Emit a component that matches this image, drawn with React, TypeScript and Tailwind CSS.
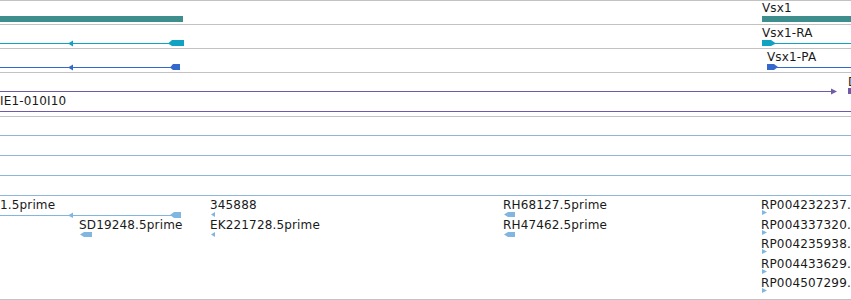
import React from "react";

const W = 851;
const TEAL = "#3f8e8e";
const CYAN = "#10a2c2";
const BLUE = "#3468cc";
const PURPLE = "#6f5ba8";
const LBLUE = "#80b6df";
const LLINE = "#8fb6da";

function Glyphs({ h, children }: { h: number; children: React.ReactNode }) {
  return (
    <svg
      className="absolute left-0 -top-px"
      width={W}
      height={h}
      viewBox={`0 0 ${W} ${h}`}
      shapeRendering="crispEdges"
    >
      {children}
    </svg>
  );
}

function Label({ className, children }: { className: string; children: React.ReactNode }) {
  return (
    <div className={`absolute whitespace-nowrap text-[12px] leading-[14px] tracking-[0.15px] text-[#1a1a1a] ${className}`}>
      {children}
    </div>
  );
}

export default function App() {
  return (
    <div
      className="w-[851px] h-[300px] bg-white overflow-hidden flex flex-col"
      style={{ fontFamily: '"DejaVu Sans", "Liberation Sans", sans-serif' }}
    >
      {/* Track 1: gene */}
      <div className="relative h-[24px] shrink-0 border-t border-[#c2c2c2]">
        <Glyphs h={24}>
          <rect x={0} y={16} width={183} height={6} fill={TEAL} />
          <rect x={762} y={16} width={89} height={6} fill={TEAL} />
        </Glyphs>
        <Label className="left-[762px] top-0">Vsx1</Label>
      </div>

      {/* Track 2: transcript */}
      <div className="relative h-[24px] shrink-0 border-t border-[#c2c2c2]">
        <Glyphs h={24}>
          <rect x={0} y={19} width={172} height={1} fill={CYAN} />
          <polygon points="68,19.5 73,16.5 73,22.5" fill={CYAN} shapeRendering="auto" />
          <polygon points="168,19.5 172,16 184,16 184,22 172,22" fill={CYAN} shapeRendering="auto" />
          <polygon points="762,16 771,16 776,19.5 771,22 762,22" fill={CYAN} shapeRendering="auto" />
          <rect x={775} y={19} width={76} height={1} fill={CYAN} />
        </Glyphs>
        <Label className="left-[762px] top-[1px]">Vsx1-RA</Label>
      </div>

      {/* Track 3: protein */}
      <div className="relative h-[24px] shrink-0 border-t border-[#c2c2c2]">
        <Glyphs h={24}>
          <rect x={0} y={19} width={172} height={1} fill={BLUE} />
          <polygon points="68,19.5 73,16.5 73,22.5" fill={BLUE} shapeRendering="auto" />
          <polygon points="170,19.5 173,16 180,16 180,22 173,22" fill={BLUE} shapeRendering="auto" />
          <polygon points="767,16 774,16 778,19 774,22 767,22" fill={BLUE} shapeRendering="auto" />
          <rect x={777} y={19} width={74} height={1} fill={BLUE} />
        </Glyphs>
        <Label className="left-[767px] top-[1px]">Vsx1-PA</Label>
      </div>

      {/* Track 4: clones */}
      <div className="relative h-[44px] shrink-0 border-t border-[#c2c2c2]">
        <Glyphs h={44}>
          <rect x={0} y={19} width={832} height={1} fill={PURPLE} />
          <polygon points="831,16.5 837,19.5 831,22.5" fill={PURPLE} shapeRendering="auto" />
          <rect x={847.5} y={16} width={4} height={5.5} fill={PURPLE} />
          <rect x={0} y={39} width={W} height={1} fill={PURPLE} />
        </Glyphs>
        <Label className="left-[848px] top-[2px]">D</Label>
        <Label className="left-0 top-[21px]">IE1-010I10</Label>
      </div>

      {/* Track 5: ESTs */}
      <div className="relative h-[184px] shrink-0 border-t border-b border-[#c2c2c2]">
        <Glyphs h={184}>
          <rect x={0} y={19} width={W} height={1} fill={LLINE} />
          <rect x={0} y={39} width={W} height={1} fill={LLINE} />
          <rect x={0} y={59} width={W} height={1} fill={LLINE} />
          <rect x={0} y={79} width={W} height={1} fill={LLINE} />

          <rect x={0} y={99} width={174} height={1} fill={LBLUE} />
          <polygon points="68,99.5 73,96.5 73,102" fill={LBLUE} shapeRendering="auto" />
          <polygon points="170,99 174,96 181,96 181,102 174,102" fill={LBLUE} shapeRendering="auto" />

          <polygon points="80,118.5 84,116 92,116 92,121 84,121" fill={LBLUE} shapeRendering="auto" />

          <polygon points="211,98.5 215,96 215,101" fill={LBLUE} shapeRendering="auto" />
          <polygon points="211,118.5 215,116 215,121" fill={LBLUE} shapeRendering="auto" />

          <polygon points="504,98.5 508,96 515,96 515,101 508,101" fill={LBLUE} shapeRendering="auto" />
          <polygon points="504,118.5 508,116 515,116 515,121 508,121" fill={LBLUE} shapeRendering="auto" />

          <polygon points="762,94 767,96.5 762,99" fill={LBLUE} shapeRendering="auto" />
          <polygon points="762,114 767,116.5 762,119" fill={LBLUE} shapeRendering="auto" />
          <polygon points="762,133 767,135.5 762,138" fill={LBLUE} shapeRendering="auto" />
          <polygon points="762,153 767,155.5 762,158" fill={LBLUE} shapeRendering="auto" />
          <polygon points="762,172 767,174.5 762,177" fill={LBLUE} shapeRendering="auto" />
        </Glyphs>
        <Label className="left-0 top-[81px]">1.5prime</Label>
        <Label className="left-[79px] top-[101px]">SD19248.5prime</Label>
        <Label className="left-[210px] top-[81px]">345888</Label>
        <Label className="left-[210px] top-[101px]">EK221728.5prime</Label>
        <Label className="left-[503px] top-[81px]">RH68127.5prime</Label>
        <Label className="left-[503px] top-[101px]">RH47462.5prime</Label>
        <Label className="left-[761px] top-[81px]">RP004232237.</Label>
        <Label className="left-[761px] top-[101px]">RP004337320.</Label>
        <Label className="left-[761px] top-[120px]">RP004235938.</Label>
        <Label className="left-[761px] top-[140px]">RP004433629.</Label>
        <Label className="left-[761px] top-[159px]">RP004507299.</Label>
      </div>
    </div>
  );
}
